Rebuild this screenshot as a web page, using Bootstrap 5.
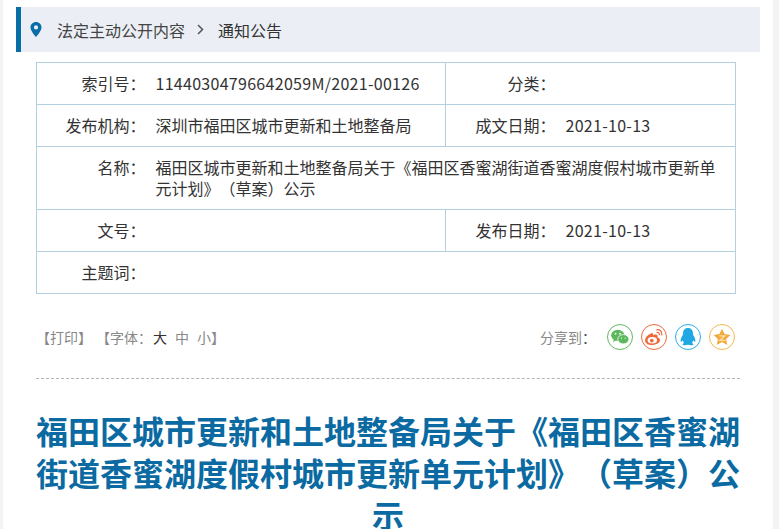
<!DOCTYPE html>
<html lang="zh-CN">
<head>
<meta charset="utf-8">
<title>通知公告</title>
<link rel="stylesheet" href="https://cdn.jsdelivr.net/npm/bootstrap@5.3.0/dist/css/bootstrap.min.css">
<style>
html,body{height:529px;overflow:hidden}
body{background:#f3f3f3;font-family:"Noto Sans CJK SC","Liberation Sans",sans-serif;color:#333;font-size:16px;text-spacing-trim:space-all}
.pane{background:#fff;margin:0 6px 0 3px;height:529px;padding:7px 13px 0 13px;overflow:hidden}
.crumb{height:45px;background:#ebeff5;border-left:5px solid #0a6ea6;padding-left:9px;color:#444}
.crumb svg{width:12px;height:15px;margin-right:15px}
.crumb .sep{margin:0 14px 0 12px;width:7px;height:11px}
.crumb .cur{color:#333}
.meta{width:700px;margin:10px 0 0 20px;border-collapse:collapse;table-layout:fixed;line-height:21px}
.meta td{border:1px solid #b4cfe0;padding:10px 0;vertical-align:top;color:#333;height:42px}
.meta .lab{text-align:right;padding-right:0;border-right:0;white-space:nowrap}
.meta .val{padding-left:10px;padding-right:10px;border-left:0}
.num{letter-spacing:.29px}
.lab-col{width:109px}.val-col{width:300px}.lab2-col{width:110px}
.tools{margin:26px 25px 0 20px;height:34px;font-size:14px;color:#888}
.tools .big{color:#333;margin-left:1px}
.tools .gap{margin-left:8px}
.tools .lead-gap{margin-left:4px}
.shr{margin-right:3px}
.shr b{font-weight:400;color:#445}
.rnd{width:26px;height:26px;border-radius:50%;border:1.300px solid;background:#fff;margin-left:8px}
.rnd svg{width:20px;height:20px}
.c1{border-color:#62b960}.c2{border-color:#ee6a3c}.c3{border-color:#29aee6}.c4{border-color:#f4b84e}
.dash{margin:24px 20px 0 20px;border-top:1px dashed #b5b5b5}
.ttl{margin:30px 20px 0 20px;font-size:32px;line-height:42px;font-weight:700;color:#0a6aa1;text-align:center}
</style>
</head>
<body>
<div class="pane">
  <div class="crumb d-flex align-items-center">
    <svg viewBox="0 0 11 15"><path fill="#0a6ea6" fill-rule="evenodd" d="M5.500 0C2.500 0 0 2.400 0 5.400 0 9 5.500 15 5.500 15S11 9 11 5.400C11 2.400 8.500 0 5.500 0zm0 3.300a2.100 2.100 0 1 1 0 4.200 2.100 2.100 0 0 1 0-4.200z"/></svg>
    <span>法定主动公开内容</span>
    <svg class="sep" viewBox="0 0 7 11"><path d="M1 1l4.500 4.500L1 10" fill="none" stroke="#555" stroke-width="1.500"/></svg>
    <span class="cur">通知公告</span>
  </div>

  <table class="meta">
    <colgroup><col class="lab-col"><col class="val-col"><col class="lab2-col"><col></colgroup>
    <tbody>
    <tr><td class="lab">索引号：</td><td class="val"><span class="num">11440304796642059M/2021-00126</span></td><td class="lab">分类：</td><td class="val"></td></tr>
    <tr><td class="lab">发布机构：</td><td class="val">深圳市福田区城市更新和土地整备局</td><td class="lab">成文日期：</td><td class="val"><span class="num">2021-10-13</span></td></tr>
    <tr><td class="lab">名称：</td><td class="val" colspan="3">福田区城市更新和土地整备局关于《福田区香蜜湖街道香蜜湖度假村城市更新单元计划》（草案）公示</td></tr>
    <tr><td class="lab">文号：</td><td class="val"></td><td class="lab">发布日期：</td><td class="val"><span class="num">2021-10-13</span></td></tr>
    <tr><td class="lab">主题词：</td><td class="val" colspan="3"></td></tr>
    </tbody>
  </table>

  <div class="tools d-flex align-items-center justify-content-between">
    <div><span>【打印】</span><span class="lead-gap">【字体：</span><span class="big">大</span><span class="gap">中</span><span class="gap">小</span><span>】</span></div>
    <div class="d-flex align-items-center">
      <span class="shr">分享到<b>：</b></span>
      <span class="rnd c1 d-flex align-items-center justify-content-center">
        <svg viewBox="0 0 18 18"><ellipse cx="7" cy="7.500" rx="6" ry="5" fill="#5cb85a"/><path d="M3.500 11l-.8 2.500 3-1.500z" fill="#5cb85a"/><ellipse cx="12" cy="11" rx="5" ry="4.200" fill="#5cb85a" stroke="#fff" stroke-width=".7"/><circle cx="5" cy="6" r=".8" fill="#fff"/><circle cx="9" cy="6" r=".8" fill="#fff"/><circle cx="10.300" cy="10" r=".6" fill="#fff"/><circle cx="13.700" cy="10" r=".6" fill="#fff"/></svg>
      </span>
      <span class="rnd c2 d-flex align-items-center justify-content-center">
        <svg viewBox="0 0 18 18"><path d="M7.500 5.500C4 6.500.8 9.500 1 12.300 1.300 15 4.500 16.500 8 16.200c3.800-.3 6.700-2.400 6.400-4.700-.2-1.300-1.400-1.800-2.300-2.100.6-1.400.1-2.300-.9-2.500-1-.2-2.500.3-3 .8.300-1.200.1-2.900-.7-1.700z" fill="#ee6a3c"/><ellipse cx="7.500" cy="12" rx="4.200" ry="2.900" fill="#fff"/><circle cx="7" cy="12.200" r="1.700" fill="#ee6a3c"/><path d="M11.500 2.500c2.500-.5 5 1.500 4.500 4.500M11.800 4.800c1.200-.2 2.200.7 2 2" fill="none" stroke="#ee6a3c" stroke-width="1.100" stroke-linecap="round"/></svg>
      </span>
      <span class="rnd c3 d-flex align-items-center justify-content-center">
        <svg viewBox="0 0 18 18"><path d="M9 1C6 1 4.500 3.200 4.500 6c0 .8-.2 1.300-.7 2.100C2.700 10 2 11.800 2.500 13c.4.700 1.200-.1 1.700-1 .2 1 .7 1.800 1.400 2.400-.9.400-1.600.9-1.300 1.500.4.800 3.100.6 4.700.1 1.600.5 4.300.7 4.700-.1.300-.6-.4-1.100-1.300-1.500.7-.6 1.200-1.400 1.400-2.400.5.900 1.300 1.700 1.700 1 .5-1.200-.2-3-1.300-4.900-.5-.8-.7-1.300-.7-2.100C13.500 3.200 12 1 9 1z" fill="#1fa8e4"/></svg>
      </span>
      <span class="rnd c4 d-flex align-items-center justify-content-center">
        <svg viewBox="0 0 18 18"><path d="M9 1.500l2.300 4.900 5.300.7-3.900 3.700 1 5.300L9 13.500l-4.700 2.600 1-5.300L1.400 7.100l5.300-.7z" fill="#f2aa3f"/><path d="M6.500 8h5l-4.500 4h5" fill="none" stroke="#fde2a8" stroke-width="1.100"/></svg>
      </span>
    </div>
  </div>

  <div class="dash"></div>
  <h1 class="ttl">福田区城市更新和土地整备局关于《福田区香蜜湖街道香蜜湖度假村城市更新单元计划》（草案）公示</h1>
</div>
<script src="https://cdn.jsdelivr.net/npm/bootstrap@5.3.0/dist/js/bootstrap.bundle.min.js"></script>
</body>
</html>
